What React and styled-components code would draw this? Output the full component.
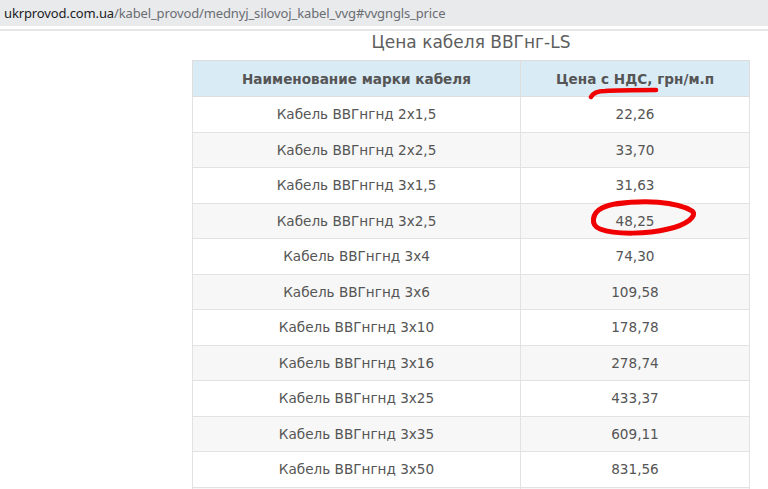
import styled, { createGlobalStyle } from "styled-components";

const rows = [
  ["Кабель ВВГнгнд 2х1,5", "22,26"],
  ["Кабель ВВГнгнд 2х2,5", "33,70"],
  ["Кабель ВВГнгнд 3х1,5", "31,63"],
  ["Кабель ВВГнгнд 3х2,5", "48,25"],
  ["Кабель ВВГнгнд 3х4", "74,30"],
  ["Кабель ВВГнгнд 3х6", "109,58"],
  ["Кабель ВВГнгнд 3х10", "178,78"],
  ["Кабель ВВГнгнд 3х16", "278,74"],
  ["Кабель ВВГнгнд 3х25", "433,37"],
  ["Кабель ВВГнгнд 3х35", "609,11"],
  ["Кабель ВВГнгнд 3х50", "831,56"],
  ["", ""],
];

function App() {
  return (
    <>
      <GlobalStyle />
      <AddressBar>
        <Domain>ukrprovod.com.ua</Domain>
        <Path>/kabel_provod/mednyj_silovoj_kabel_vvg#vvgngls_price</Path>
      </AddressBar>
      <Divider />
      <Page>
        <Sidebar />
        <Main>
          <Title>Цена кабеля ВВГнг-LS</Title>
          <TableWrap>
            <PriceTable>
              <thead>
                <tr>
                  <Th>Наименование марки кабеля</Th>
                  <Th>Цена с НДС, грн/м.п</Th>
                </tr>
              </thead>
              <tbody>
                {rows.map(([name, price], i) => (
                  <Row key={i} $alt={i % 2 === 1}>
                    <Td>{name}</Td>
                    <Td>{price}</Td>
                  </Row>
                ))}
              </tbody>
            </PriceTable>
            <Underline viewBox="0 0 72 14" width="72" height="14">
              <path
                d="M3 11 C5 7, 9 5, 17 5 C30 4, 50 4, 68 4"
                fill="none"
                stroke="#f00000"
                strokeWidth="4.5"
                strokeLinecap="round"
              />
            </Underline>
            <Circle viewBox="0 0 112 42" width="112" height="42">
              <path
                d="M28 6 C55 2, 88 3, 104 13 C110 18, 98 27, 80 31 C60 36, 28 37, 12 31 C2 27, 4 15, 14 10 C24 5, 40 4, 52 4"
                fill="none"
                stroke="#f00000"
                strokeWidth="5"
                strokeLinecap="round"
                strokeLinejoin="round"
              />
            </Circle>
          </TableWrap>
        </Main>
      </Page>
    </>
  );
}

const GlobalStyle = createGlobalStyle`
  html, body {
    margin: 0;
    padding: 0;
    background: #ffffff;
    overflow: hidden;
  }
`;

const AddressBar = styled.div`
  height: 26px;
  background: #e9eaec;
  display: flex;
  align-items: center;
  padding-left: 4px;
  font-family: "Noto Sans", "Open Sans", sans-serif;
  font-size: 13px;
  letter-spacing: -0.13px;
  white-space: nowrap;
`;

const Domain = styled.span`
  color: #202124;
`;

const Path = styled.span`
  color: #6a6d72;
`;

const Divider = styled.div`
  margin-top: 3px;
  height: 2px;
  background: #e6e6e6;
`;

const Page = styled.div`
  display: grid;
  grid-template-columns: 192px 558px;
`;

const Sidebar = styled.div``;

const Main = styled.div`
  display: flex;
  flex-direction: column;
  font-family: "DejaVu Sans", Verdana, sans-serif;
  color: #555555;
`;

const Title = styled.h2`
  margin: 0;
  height: 29px;
  line-height: 22px;
  text-align: center;
  font-size: 17px;
  font-weight: normal;
  color: #5e5e5e;
`;

const TableWrap = styled.div`
  position: relative;
`;

const PriceTable = styled.table`
  width: 100%;
  border-collapse: collapse;
  border: 1px solid #dddddd;
  table-layout: fixed;
  font-size: 13.6px;

  th:first-child,
  td:first-child {
    width: 327px;
  }
`;

const Th = styled.th`
  height: 35px;
  padding: 0;
  background: #d9ebf5;
  border: 1px solid #dddddd;
  font-weight: bold;
  color: #555555;
  text-align: center;
`;

const Row = styled.tr`
  background: ${(p) => (p.$alt ? "#f7f7f7" : "#ffffff")};
`;

const Td = styled.td`
  height: 34.5px;
  padding: 0;
  border: 1px solid #e2e2e2;
  text-align: center;
  color: #555555;
`;

const Underline = styled.svg`
  position: absolute;
  left: 396px;
  top: 26px;
  pointer-events: none;
`;

const Circle = styled.svg`
  position: absolute;
  left: 396px;
  top: 138px;
  pointer-events: none;
`;

export default App;
